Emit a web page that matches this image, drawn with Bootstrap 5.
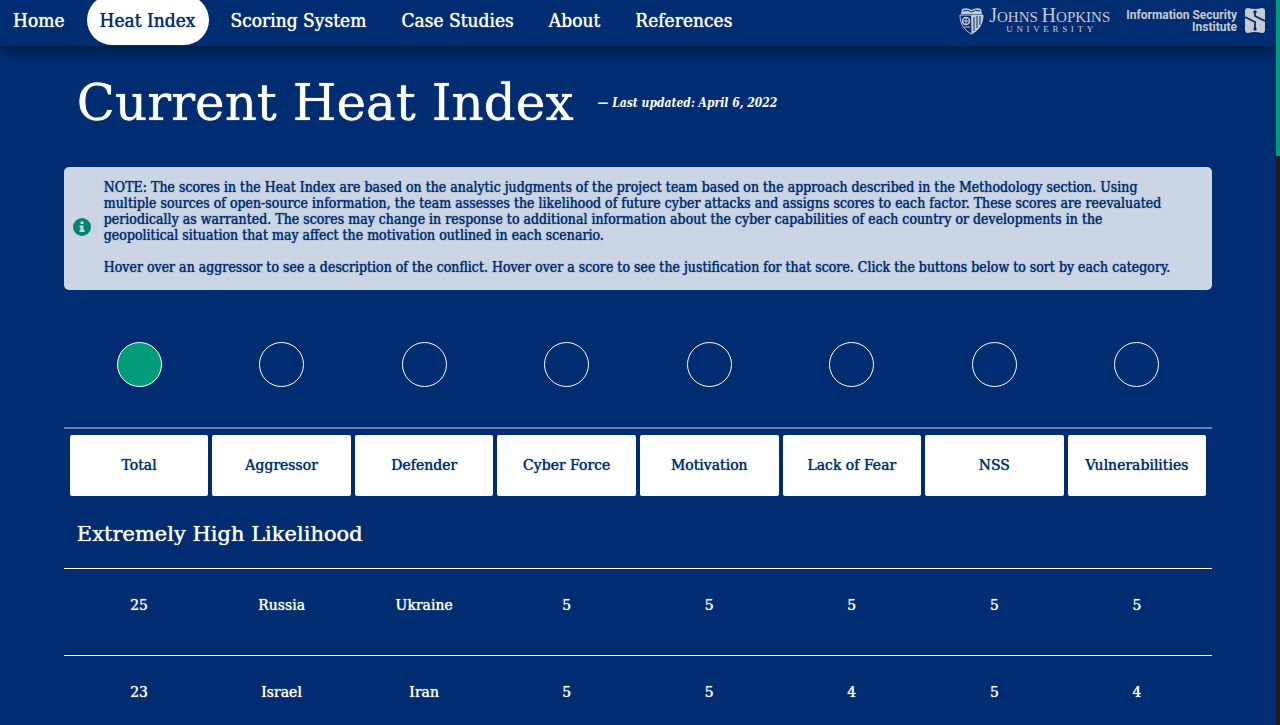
<!DOCTYPE html>
<html lang="en">
<head>
<meta charset="utf-8">
<meta name="viewport" content="width=device-width, initial-scale=1">
<title>Current Heat Index</title>
<link href="https://cdn.jsdelivr.net/npm/bootstrap@5.3.0/dist/css/bootstrap.min.css" rel="stylesheet">
<style>
  body { background: #002d72; color: #fff; font-family: "DejaVu Serif Condensed", "DejaVu Serif", serif; }
  .topbar .nav, h1, .note, .score-table { text-shadow: 0 0 1px currentColor; }
  .page { margin-right: 4px; }
  .scroll-track { width: 4px; background: #1f1f1f; }
  .scroll-thumb { height: 156px; background: #009b77; }
  .topbar { height: 46px; background: #002d72; box-shadow: 0 4px 14px rgba(0, 0, 0, .5); padding-bottom: 1px; }
  .topbar .nav { gap: 9px; }
  .topbar .nav-link { color: #fff; font-size: 19px; line-height: 28px; padding: 11px 13px; }
  .topbar .nav-link.active { background: #fff; color: #002d72; border-radius: 25px; }
  .brands { color: #c6cbd0; padding: 0 11px 4px 0; }
  .jhu-name { font-family: "Liberation Serif", serif; font-size: 15px; line-height: 16px; }
  .jhu-name span { font-size: 20px; }
  .jhu-sub { font-family: "Liberation Serif", serif; font-size: 9px; line-height: 9px; padding: 0 17px; }
  .isi-name { font-family: Roboto, sans-serif; font-weight: 700; font-size: 12px; line-height: 12px; }
  .content-area { padding: 29px 5% 0; }
  .title-row { padding-left: 13px; }
  h1 { font-family: "DejaVu Serif", serif; font-size: 50px; line-height: 56px; }
  .updated { font-size: 12px; font-weight: 700; }
  .note { background: #ccd5e3; color: #002d72; border-radius: 5px; font-size: 14px; line-height: 16px; padding: 12px 38px 15px 9px; margin: 36px 0 0; gap: 13px; }
  .score-table { font-family: "DejaVu Serif", serif; font-size: 14px; line-height: 20px; }
  .score-table tr { display: grid; grid-template-columns: repeat(8, 1fr); padding: 0 4px; }
  .score-table th, .score-table td { font-weight: 400; padding: 0; text-align: center; }
  .score-table .sort-row { padding: 52px 4px 40px; border-bottom: 2px solid #6681aa; }
  .sort-dot { appearance: none; width: 45px; height: 45px; border: 1px solid #fff; border-radius: 50%; margin: 0 auto; display: block; }
  .sort-dot:checked { background: #009b77; }
  .score-table .label-row { padding-top: 6px; }
  .label-row th { padding: 0 2px; }
  .label-row .btn { background: #fff; color: #002d72; border: 0; border-radius: 2px; height: 61px; font-size: 14px; padding: 0; text-shadow: inherit; }
  .score-table .level th { grid-column: 1 / -1; text-align: left; font-size: 21px; line-height: 30px; padding: 23px 9px 19px; }
  .score-row { border-top: 1px solid #fff; }
  .score-table .score-row td { padding: 26px 0 40px; }
</style>
</head>
<body class="vh-100 overflow-hidden">
<div class="scroll-track position-fixed top-0 end-0 h-100"><div class="scroll-thumb"></div></div>
<div class="page">
  <header class="topbar d-flex justify-content-between align-items-end">
    <nav class="nav flex-nowrap">
      <a class="nav-link" href="#">Home</a>
      <a class="nav-link active" href="#" aria-current="page">Heat Index</a>
      <a class="nav-link" href="#">Scoring System</a>
      <a class="nav-link" href="#">Case Studies</a>
      <a class="nav-link" href="#">About</a>
      <a class="nav-link" href="#">References</a>
    </nav>
    <div class="brands d-flex align-items-center h-100">
      <a href="#" class="d-flex align-items-center text-reset text-decoration-none text-nowrap me-3">
        <svg class="me-1" width="26" height="28" viewBox="0 0 26 28" aria-hidden="true">
          <path d="M3 2 Q8 0 12.500 3 Q17 0 22 2 L23 7 H2Z" fill="#c6cbd0"/>
          <path d="M4 4 Q9 2 12.500 5 Q16 2 21 4" fill="none" stroke="#002d72"/>
          <path d="M1 8 H24 C24 17 20 23 12.500 27 C5 23 1 17 1 8Z" fill="#002d72" stroke="#c6cbd0"/>
          <path d="M12 8 H24 C24 17 20 23 12.500 27Z" fill="#c6cbd0"/>
          <path d="M15 10 V24 M18 9 V21 M21 9 V18" stroke="#002d72" stroke-width="1"/>
          <circle cx="7" cy="14" r="3.500" fill="none" stroke="#c6cbd0" stroke-width="1.500"/>
          <path d="M3 14 H11 M7 10 V18 M5 20 L11 20" stroke="#c6cbd0"/>
        </svg>
        <span class="d-block">
          <span class="jhu-name d-block"><span>J</span>OHNS <span>H</span>OPKINS</span>
          <span class="jhu-sub d-flex justify-content-between" aria-label="UNIVERSITY"><span>U</span><span>N</span><span>I</span><span>V</span><span>E</span><span>R</span><span>S</span><span>I</span><span>T</span><span>Y</span></span>
        </span>
      </a>
      <a href="#" class="d-flex align-items-center text-reset text-decoration-none text-nowrap">
        <span class="isi-name text-end">Information Security<br>Institute</span>
        <svg class="ms-2" width="20" height="25" viewBox="0 0 20 25" aria-hidden="true">
          <path d="M3 0 Q10 2 17 0 Q20 0 20 3 V22 Q20 25 17 25 Q10 23 3 25 Q0 25 0 22 V3 Q0 0 3 0Z" fill="#c6cbd0"/>
          <path d="M10 3 V8 L20 13 M0 9 L10 14 V21" fill="none" stroke="#002d72" stroke-width="1.800"/>
          <circle cx="10" cy="4" r="1.700" fill="#002d72"/><circle cx="10" cy="21" r="1.700" fill="#002d72"/>
        </svg>
      </a>
    </div>
  </header>

  <main class="content-area">
    <div class="title-row d-flex align-items-center">
      <h1 class="mb-0 me-4 text-nowrap">Current Heat Index</h1>
      <em class="updated">— Last updated: April 6, 2022</em>
    </div>

    <div class="note d-flex align-items-center" role="note">
      <svg class="flex-shrink-0" width="18" height="18" viewBox="0 0 18 18" aria-hidden="true">
        <circle cx="9" cy="9" r="9" fill="#008575"/>
        <path d="M7.500 3.500 H10.500 V6 H7.500Z M6.500 7.500 H10.500 V12 H11.500 V14 H6.500 V12 H7.500 V9.500 H6.500Z" fill="#ccd5e3"/>
      </svg>
      <div>
        <p class="mb-3">NOTE: The scores in the Heat Index are based on the analytic judgments of the project team based on the approach described in the Methodology section. Using multiple sources of open-source information, the team assesses the likelihood of future cyber attacks and assigns scores to each factor. These scores are reevaluated periodically as warranted. The scores may change in response to additional information about the cyber capabilities of each country or developments in the geopolitical situation that may affect the motivation outlined in each scenario.</p>
        <p class="mb-0">Hover over an aggressor to see a description of the conflict. Hover over a score to see the justification for that score. Click the buttons below to sort by each category.</p>
      </div>
    </div>

    <table class="score-table d-block">
      <thead class="d-block">
        <tr class="sort-row">
          <td><input class="sort-dot" type="radio" name="sort" aria-label="Sort by Total" checked></td>
          <td><input class="sort-dot" type="radio" name="sort" aria-label="Sort by Aggressor"></td>
          <td><input class="sort-dot" type="radio" name="sort" aria-label="Sort by Defender"></td>
          <td><input class="sort-dot" type="radio" name="sort" aria-label="Sort by Cyber Force"></td>
          <td><input class="sort-dot" type="radio" name="sort" aria-label="Sort by Motivation"></td>
          <td><input class="sort-dot" type="radio" name="sort" aria-label="Sort by Lack of Fear"></td>
          <td><input class="sort-dot" type="radio" name="sort" aria-label="Sort by NSS"></td>
          <td><input class="sort-dot" type="radio" name="sort" aria-label="Sort by Vulnerabilities"></td>
        </tr>
        <tr class="label-row">
          <th scope="col"><button type="button" class="btn w-100">Total</button></th>
          <th scope="col"><button type="button" class="btn w-100">Aggressor</button></th>
          <th scope="col"><button type="button" class="btn w-100">Defender</button></th>
          <th scope="col"><button type="button" class="btn w-100">Cyber Force</button></th>
          <th scope="col"><button type="button" class="btn w-100">Motivation</button></th>
          <th scope="col"><button type="button" class="btn w-100">Lack of Fear</button></th>
          <th scope="col"><button type="button" class="btn w-100">NSS</button></th>
          <th scope="col"><button type="button" class="btn w-100">Vulnerabilities</button></th>
        </tr>
      </thead>
      <tbody class="d-block">
        <tr class="level"><th colspan="8">Extremely High Likelihood</th></tr>
        <tr class="score-row"><td>25</td><td>Russia</td><td>Ukraine</td><td>5</td><td>5</td><td>5</td><td>5</td><td>5</td></tr>
        <tr class="score-row"><td>23</td><td>Israel</td><td>Iran</td><td>5</td><td>5</td><td>4</td><td>5</td><td>4</td></tr>
      </tbody>
    </table>
  </main>
</div>
<script src="https://cdn.jsdelivr.net/npm/bootstrap@5.3.0/dist/js/bootstrap.bundle.min.js"></script>
</body>
</html>
